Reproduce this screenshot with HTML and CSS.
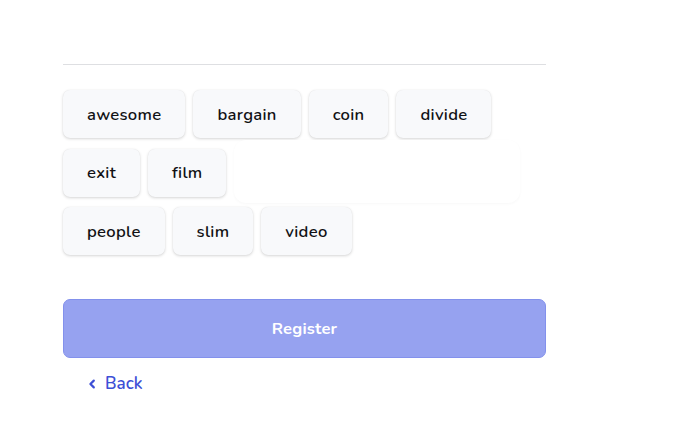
FILE: index.html
```html
<!DOCTYPE html>
<html>
<head>
<meta charset="utf-8">
<link rel="stylesheet" href="styles.css">
</head>
<body>
<div class="wrap">
  <hr class="divider">
  <div class="chips">
    <div class="row">
      <div class="chip">awesome</div>
      <div class="chip">bargain</div>
      <div class="chip">coin</div>
      <div class="chip">divide</div>
    </div>
    <div class="row">
      <div class="chip">exit</div>
      <div class="chip">film</div>
    </div>
    <div class="row">
      <div class="chip">people</div>
      <div class="chip">slim</div>
      <div class="chip">video</div>
    </div>
    <div class="ghost"></div>
  </div>
  <button class="register">Register</button>
  <a class="back" href="#">
    <svg width="8" height="10" viewBox="0 0 8 10"><path d="M5.8 1.6 L2.4 5 L5.8 8.4" fill="none" stroke="currentColor" stroke-width="2.2" stroke-linecap="round" stroke-linejoin="round"/></svg>
    <span>Back</span>
  </a>
</div>
</body>
</html>
```
FILE: styles.css
```css
html, body {
  margin: 0;
  padding: 0;
  background: #ffffff;
}
body {
  font-family: "Nunito", "Lato", "Noto Sans", sans-serif;
  color: #111114;
}
.wrap {
  width: 483px;
  padding: 64px 0 0 63px;
  display: flex;
  flex-direction: column;
}
.divider {
  margin: 0;
  border: 0;
  height: 1px;
  background: #dedfe2;
}
.chips {
  position: relative;
  margin-top: 25px;
  display: flex;
  flex-direction: column;
  gap: 10.5px;
}
.row {
  display: flex;
  gap: 8px;
}
.chip {
  height: 48px;
  padding: 0 24px;
  display: flex;
  align-items: center;
  background: #f8f9fb;
  border-radius: 7px;
  box-shadow: 0 1px 3px rgba(0, 0, 0, 0.16), 0 0 1px rgba(0, 0, 0, 0.08);
  font-size: 16.6px;
  font-weight: 600;
  letter-spacing: 0.3px;
  position: relative;
  z-index: 1;
}
.ghost {
  position: absolute;
  left: 171px;
  top: 50px;
  width: 286px;
  height: 63px;
  background: #ffffff;
  border-radius: 12px;
  box-shadow: 0 1px 3px rgba(0, 0, 0, 0.03);
  z-index: 2;
}
.register {
  margin-top: 44px;
  height: 59px;
  width: 483px;
  background: #96a2f0;
  border: 1px solid #8391ec;
  border-radius: 7px;
  color: #ffffff;
  font-family: inherit;
  font-size: 16.5px;
  font-weight: 700;
  letter-spacing: 0.2px;
}
.back {
  margin-top: 14px;
  margin-left: 25px;
  display: flex;
  align-items: center;
  gap: 9px;
  color: #3d4fd6;
  text-decoration: none;
  font-size: 17px;
  font-weight: 600;
}
```
